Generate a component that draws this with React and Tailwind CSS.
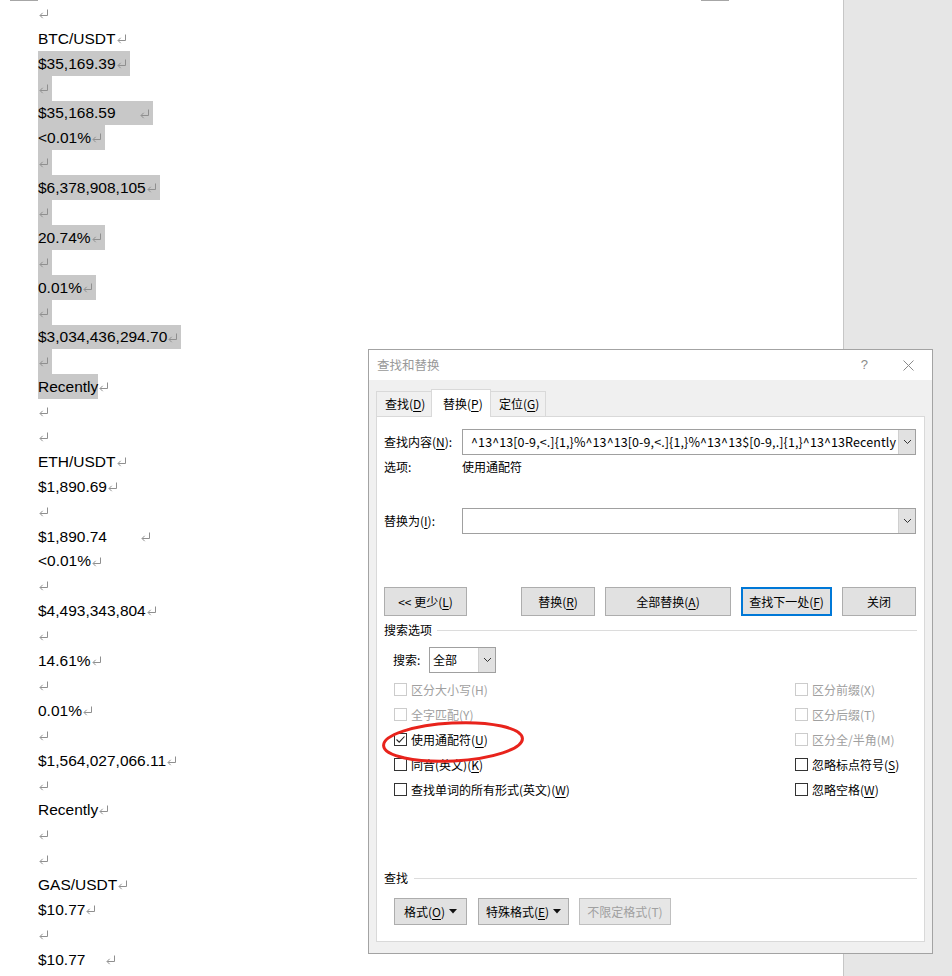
import React from 'react'

const lines = [
  { t: '' },
  { t: 'BTC/USDT' },
  { t: '$35,169.39', hl: 'all' },
  { t: '', hl: 'all' },
  { t: '$35,168.59', gap: 'w-[23px]', hl: 'all' },
  { t: '<0.01%', hl: 'all' },
  { t: '', hl: 'all' },
  { t: '$6,378,908,105', hl: 'all' },
  { t: '', hl: 'all' },
  { t: '20.74%', hl: 'all' },
  { t: '', hl: 'all' },
  { t: '0.01%', hl: 'all' },
  { t: '', hl: 'all' },
  { t: '$3,034,436,294.70', hl: 'all' },
  { t: '', hl: 'all' },
  { t: 'Recently', hl: 'text' },
  { t: '' },
  { t: '' },
  { t: 'ETH/USDT' },
  { t: '$1,890.69' },
  { t: '' },
  { t: '$1,890.74', gap: 'w-[33px]' },
  { t: '<0.01%' },
  { t: '' },
  { t: '$4,493,343,804' },
  { t: '' },
  { t: '14.61%' },
  { t: '' },
  { t: '0.01%' },
  { t: '' },
  { t: '$1,564,027,066.11' },
  { t: '' },
  { t: 'Recently' },
  { t: '' },
  { t: '' },
  { t: 'GAS/USDT' },
  { t: '$10.77' },
  { t: '' },
  { t: '$10.77', gap: 'w-[20px]' },
]

// paragraph mark, drawn like Word's formatting glyph
const Ret = () => (
  <svg width="10" height="10" viewBox="0 0 10 10" className="inline-block ml-px -mb-px" fill="none" stroke="#8f8f8f" strokeWidth="1">
    <path d="M8.5 0.5V6.5H1.2" />
    <path d="M3.7 3.8L1 6.5L3.7 9.2" />
  </svg>
)

const Chevron = () => (
  <svg width="9" height="6" viewBox="0 0 9 6" fill="none" stroke="#333" strokeWidth="1">
    <path d="M1 1L4.5 4.5L8 1" />
  </svg>
)

const Tri = () => (
  <svg width="8" height="5" viewBox="0 0 8 5" className="ml-[4px]">
    <path d="M0 0H8L4 4.5Z" fill="#111" />
  </svg>
)

function DocLine({ line }) {
  const bg = line.hl === 'all' ? 'bg-[#c8c8c8]' : ''
  return (
    <div className="h-[24.9px] flex items-stretch">
      <span className={`inline-flex items-center pr-[3px] ${bg}`}>
        <span className={line.hl === 'text' ? 'bg-[#c8c8c8] h-full inline-flex items-center' : ''}>{line.t}</span>
        {line.gap && <span className={`inline-block ${line.gap}`} />}
        <Ret />
      </span>
    </div>
  )
}

function Btn({ children, w, primary, disabled, className = '' }) {
  return (
    <div
      className={`flex items-center justify-center bg-[#e1e1e1] ${w} ${
        primary ? 'border-2 border-[#0078d7]' : 'border border-[#adadad]'
      } ${disabled ? 'text-[#a0a0a0] border-[#bfbfbf] bg-[#e6e6e6]' : 'text-black'} ${className}`}
    >
      {children}
    </div>
  )
}

function Check({ label, k, disabled, checked }) {
  return (
    <div className="h-[25px] flex items-center">
      <span
        className={`w-[13px] h-[13px] border bg-white flex items-center justify-center ${
          disabled ? 'border-[#cccccc]' : 'border-[#333333]'
        }`}
      >
        {checked && (
          <svg width="11" height="11" viewBox="0 0 11 11" fill="none" stroke="#222" strokeWidth="1.1">
            <path d="M1.5 5.5L4.2 8.2L9.5 2.5" />
          </svg>
        )}
      </span>
      <span className={`ml-[4px] ${disabled ? 'text-[#a0a0a0]' : ''}`}>
        {label}({disabled ? k : <span className="underline underline-offset-2">{k}</span>})
      </span>
    </div>
  )
}

function Field({ label, k, children }) {
  return (
    <div className="flex items-center h-[26px]">
      <div className="w-[78px]">
        {label}(<span className="underline underline-offset-2">{k}</span>):
      </div>
      <div className="w-[454px] h-[26px] border border-[#a0a0a0] bg-white flex items-stretch">
        <div className="flex-1 overflow-hidden flex items-center justify-end whitespace-nowrap pr-px">{children}</div>
        <div className="w-[17px] bg-[#e1e1e1] border-l border-[#cfcfcf] flex items-center justify-center">
          <Chevron />
        </div>
      </div>
    </div>
  )
}

export default function App() {
  return (
    <div className="relative w-[952px] h-[976px] overflow-hidden bg-white flex">
      <div className="w-[843px] relative pl-[38px] pt-px font-['Liberation_Sans',Arial,sans-serif] text-[15.5px] text-black">
        <div className="absolute left-[10px] top-0 w-[28px] h-px bg-[#a6a6a6]" />
        <div className="absolute left-[701px] top-0 w-[28px] h-px bg-[#a6a6a6]" />
        {lines.map((l, i) => (
          <DocLine key={i} line={l} />
        ))}
      </div>
      <div className="flex-1 border-l border-[#c6c6c6] bg-[#e6e6e6]" />

      {/* find & replace window */}
      <div className="absolute left-[368px] top-[349px] w-[565px] h-[605px] border border-[#a3a3a3] bg-[#f0f0f0] flex flex-col font-['Microsoft_YaHei','Noto_Sans_CJK_SC',sans-serif] text-[12px] text-black">
        <div className="h-[30px] bg-white flex items-center pl-[8px] text-[#999999]">
          <span className="text-[12.5px]">查找和替换</span>
          <span className="ml-auto text-[13px] text-[#8a8a8a] mr-[35px] font-['Liberation_Sans',sans-serif]">?</span>
          <svg width="11" height="11" viewBox="0 0 11 11" className="mr-[18px]" stroke="#8a8a8a" strokeWidth="1">
            <path d="M0.5 0.5L10.5 10.5M10.5 0.5L0.5 10.5" />
          </svg>
        </div>

        <div className="flex-1 flex flex-col px-[7px] pt-[9px] pb-[11px]">
          <div className="flex items-end h-[27px]">
            <div className="w-[56px] h-[25px] border border-b-0 border-[#d9d9d9] flex items-center pl-[8px]">
              查找(<span className="underline underline-offset-2">D</span>)
            </div>
            <div className="relative z-10 -mb-px w-[60px] h-[28px] bg-white border border-b-0 border-[#d9d9d9] flex items-center pl-[11px] -mx-px">
              替换(<span className="underline underline-offset-2">P</span>)
            </div>
            <div className="w-[56px] h-[25px] border border-b-0 border-[#d9d9d9] flex items-center pl-[8px]">
              定位(<span className="underline underline-offset-2">G</span>)
            </div>
          </div>

          <div className="flex-1 bg-white border border-[#d9d9d9] pl-[7px] pr-[7px] pt-[12px] flex flex-col">
            <Field label="查找内容" k="N">
              <span className="pr-[1px] text-[12.5px] tracking-[0.1px]">^13^13[0-9,&lt;.]{'{1,}'}%^13^13[0-9,&lt;.]{'{1,}'}%^13^13$[0-9,.]{'{1,}'}^13^13Recently</span>
            </Field>
            <div className="flex items-center h-[16px] mt-[4px]">
              <div className="w-[78px]">选项:</div>
              <div>使用通配符</div>
            </div>
            <div className="mt-[33px]">
              <Field label="替换为" k="I" />
            </div>

            <div className="flex h-[29px] mt-[53px]">
              <Btn w="w-[83px]">
                &lt;&lt; 更少(<span className="underline underline-offset-2">L</span>)
              </Btn>
              <Btn w="w-[74px]" className="ml-[54px]">
                替换(<span className="underline underline-offset-2">R</span>)
              </Btn>
              <Btn w="w-[126px]" className="ml-[10px]">
                全部替换(<span className="underline underline-offset-2">A</span>)
              </Btn>
              <Btn w="w-[91px]" primary className="ml-[10px]">
                查找下一处(<span className="underline underline-offset-2">F</span>)
              </Btn>
              <Btn w="w-[74px]" className="ml-[10px]">
                关闭
              </Btn>
            </div>

            <div className="flex items-center h-[16px] mt-[6px]">
              <span>搜索选项</span>
              <div className="flex-1 h-px bg-[#dcdcdc] ml-[5px]" />
            </div>

            <div className="flex items-center h-[26px] mt-[9px] pl-[9px]">
              <span className="w-[36px]">搜索:</span>
              <div className="w-[67px] h-[26px] border border-[#a0a0a0] bg-white flex items-stretch">
                <div className="flex-1 flex items-center pl-[3px]">全部</div>
                <div className="w-[17px] bg-[#e1e1e1] border-l border-[#cfcfcf] flex items-center justify-center">
                  <Chevron />
                </div>
              </div>
            </div>

            <div className="flex mt-[4px] pl-[10px]">
              <div className="w-[401px]">
                <Check label="区分大小写" k="H" disabled />
                <Check label="全字匹配" k="Y" disabled />
                <Check label="使用通配符" k="U" checked />
                <Check label="同音(英文)" k="K" />
                <Check label="查找单词的所有形式(英文)" k="W" />
              </div>
              <div>
                <Check label="区分前缀" k="X" disabled />
                <Check label="区分后缀" k="T" disabled />
                <Check label="区分全/半角" k="M" disabled />
                <Check label="忽略标点符号" k="S" />
                <Check label="忽略空格" k="W" />
              </div>
            </div>

            <div className="flex items-center h-[16px] mt-[68px]">
              <span>查找</span>
              <div className="flex-1 h-px bg-[#dcdcdc] ml-[6px]" />
            </div>

            <div className="flex h-[27px] mt-[12px] pl-[10px]">
              <Btn w="w-[73px]">
                格式(<span className="underline underline-offset-2">O</span>)<Tri />
              </Btn>
              <Btn w="w-[91px]" className="ml-[11px]">
                特殊格式(<span className="underline underline-offset-2">E</span>)<Tri />
              </Btn>
              <Btn w="w-[92px]" disabled className="ml-[10px]">
                不限定格式(T)
              </Btn>
            </div>
          </div>
        </div>
      </div>

      {/* red annotation ring */}
      <svg className="absolute left-[379px] top-[717px]" width="148" height="50" viewBox="0 0 148 50" fill="none">
        <ellipse cx="74" cy="25" rx="69.5" ry="19" transform="rotate(-3 74 25)" stroke="#e8231c" strokeWidth="3" />
      </svg>
    </div>
  )
}
